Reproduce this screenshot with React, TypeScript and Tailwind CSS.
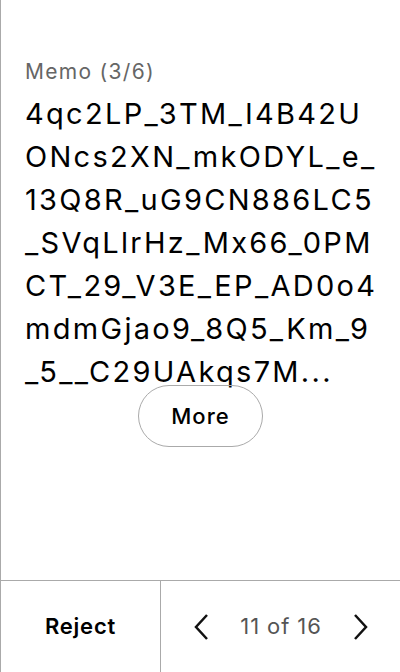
const memoLines = [
  '4qc2LP_3TM_I4B42U',
  'ONcs2XN_mkODYL_e_',
  '13Q8R_uG9CN886LC5',
  '_SVqLlrHz_Mx66_0PM',
  'CT_29_V3E_EP_AD0o4',
  'mdmGjao9_8Q5_Km_9',
  '_5__C29UAkqs7M...',
]

export default function App() {
  return (
    <div
      className="flex h-[672px] w-[400px] flex-col border-l border-[#aaaaaa] bg-white text-black"
      style={{ fontFamily: 'Inter, "Noto Sans", sans-serif' }}
    >
      <div className="flex flex-1 flex-col pl-6 pr-2 pt-[58px]">
        <div className="text-[21px] leading-[28px] tracking-[1.3px] text-[#666666]">Memo (3/6)</div>
        <p className="mt-[6px] text-[29px] leading-[43px] tracking-[2.3px]">
          {memoLines.map((line) => (
            <span key={line} className="block whitespace-nowrap">
              {line}
            </span>
          ))}
        </p>
        <div className="mt-[-8px] flex justify-center pr-4">
          <button className="h-[62px] w-[125px] rounded-full border border-[#aaaaaa] text-[22px] font-medium tracking-[1px]">
            More
          </button>
        </div>
      </div>

      {/* bottom action bar */}
      <div className="flex h-[92px] border-t border-[#aaaaaa]">
        <button className="flex w-[160px] shrink-0 items-center justify-center border-r border-[#aaaaaa] text-[22px] font-semibold tracking-[0.8px]">
          Reject
        </button>
        <div className="flex flex-1 items-center justify-between pl-[32px] pr-[31px]">
          <svg width="16" height="28" viewBox="0 0 16 28" fill="none" stroke="#111" strokeWidth="2.5">
            <path d="M14 2 L3 14 L14 26" />
          </svg>
          <span className="text-[22px] tracking-[0.9px] text-[#555555]">11 of 16</span>
          <svg width="16" height="28" viewBox="0 0 16 28" fill="none" stroke="#111" strokeWidth="2.5">
            <path d="M2 2 L13 14 L2 26" />
          </svg>
        </div>
      </div>
    </div>
  )
}
